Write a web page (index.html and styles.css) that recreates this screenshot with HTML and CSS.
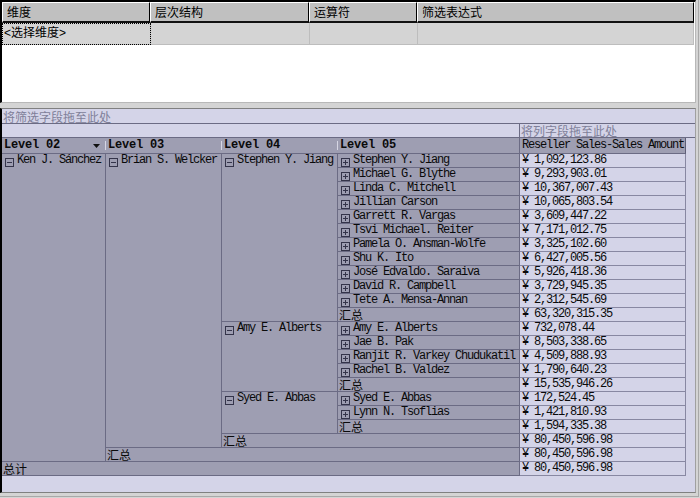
FILE: index.html
```html
<!DOCTYPE html>
<html>
<head>
<meta charset="utf-8">
<link rel="stylesheet" href="styles.css">
</head>
<body>
<div class="frame">
  <div class="top">
    <div class="ghead">
      <div class="gh w1">维度</div>
      <div class="gh w2">层次结构</div>
      <div class="gh w3">运算符</div>
      <div class="gh w4">筛选表达式</div>
    </div>
    <div class="grow">
      <div class="gd d1 focus">&lt;选择维度&gt;</div>
      <div class="gd d2"></div>
      <div class="gd d3"></div>
      <div class="gd d4"></div>
    </div>
  </div>
  <div class="pivot">
    <div class="filter-row">将筛选字段拖至此处</div>
    <div class="col-row"><div class="col-drop">将列字段拖至此处</div></div>
    <div class="pv">
      <div class="h hfirst"><span>Level 02</span><svg class="arrow" width="7" height="4" viewBox="0 0 7 4"><path d="M0 0h7L3.5 4z" fill="#111"/></svg></div>
      <div class="h">Level 03</div>
      <div class="h">Level 04</div>
      <div class="h hlast">Level 05</div>
      <div class="hv">Reseller Sales-Sales Amount</div>

      <div class="r c1 s22"><svg class="ic" viewBox="0 0 9 9"><rect x="0.5" y="0.5" width="8" height="8" fill="none" stroke="#34344a"/><path d="M2 4.5h5" stroke="#34344a"/></svg><span>Ken J. Sánchez</span></div>
      <div class="r c2 s21"><svg class="ic" viewBox="0 0 9 9"><rect x="0.5" y="0.5" width="8" height="8" fill="none" stroke="#34344a"/><path d="M2 4.5h5" stroke="#34344a"/></svg><span>Brian S. Welcker</span></div>
      <div class="r c3 s12"><svg class="ic" viewBox="0 0 9 9"><rect x="0.5" y="0.5" width="8" height="8" fill="none" stroke="#34344a"/><path d="M2 4.5h5" stroke="#34344a"/></svg><span>Stephen Y. Jiang</span></div>
      <div class="r c4"><svg class="ic" viewBox="0 0 9 9"><rect x="0.5" y="0.5" width="8" height="8" fill="none" stroke="#34344a"/><path d="M2 4.5h5M4.5 2v5" stroke="#34344a"/></svg><span>Stephen Y. Jiang</span></div>
      <div class="v"><span class="y">¥</span>1,092,123.86</div>

      <div class="r c4"><svg class="ic" viewBox="0 0 9 9"><rect x="0.5" y="0.5" width="8" height="8" fill="none" stroke="#34344a"/><path d="M2 4.5h5M4.5 2v5" stroke="#34344a"/></svg><span>Michael G. Blythe</span></div>
      <div class="v"><span class="y">¥</span>9,293,903.01</div>
      <div class="r c4"><svg class="ic" viewBox="0 0 9 9"><rect x="0.5" y="0.5" width="8" height="8" fill="none" stroke="#34344a"/><path d="M2 4.5h5M4.5 2v5" stroke="#34344a"/></svg><span>Linda C. Mitchell</span></div>
      <div class="v"><span class="y">¥</span>10,367,007.43</div>
      <div class="r c4"><svg class="ic" viewBox="0 0 9 9"><rect x="0.5" y="0.5" width="8" height="8" fill="none" stroke="#34344a"/><path d="M2 4.5h5M4.5 2v5" stroke="#34344a"/></svg><span>Jillian Carson</span></div>
      <div class="v"><span class="y">¥</span>10,065,803.54</div>
      <div class="r c4"><svg class="ic" viewBox="0 0 9 9"><rect x="0.5" y="0.5" width="8" height="8" fill="none" stroke="#34344a"/><path d="M2 4.5h5M4.5 2v5" stroke="#34344a"/></svg><span>Garrett R. Vargas</span></div>
      <div class="v"><span class="y">¥</span>3,609,447.22</div>
      <div class="r c4"><svg class="ic" viewBox="0 0 9 9"><rect x="0.5" y="0.5" width="8" height="8" fill="none" stroke="#34344a"/><path d="M2 4.5h5M4.5 2v5" stroke="#34344a"/></svg><span>Tsvi Michael. Reiter</span></div>
      <div class="v"><span class="y">¥</span>7,171,012.75</div>
      <div class="r c4"><svg class="ic" viewBox="0 0 9 9"><rect x="0.5" y="0.5" width="8" height="8" fill="none" stroke="#34344a"/><path d="M2 4.5h5M4.5 2v5" stroke="#34344a"/></svg><span>Pamela O. Ansman-Wolfe</span></div>
      <div class="v"><span class="y">¥</span>3,325,102.60</div>
      <div class="r c4"><svg class="ic" viewBox="0 0 9 9"><rect x="0.5" y="0.5" width="8" height="8" fill="none" stroke="#34344a"/><path d="M2 4.5h5M4.5 2v5" stroke="#34344a"/></svg><span>Shu K. Ito</span></div>
      <div class="v"><span class="y">¥</span>6,427,005.56</div>
      <div class="r c4"><svg class="ic" viewBox="0 0 9 9"><rect x="0.5" y="0.5" width="8" height="8" fill="none" stroke="#34344a"/><path d="M2 4.5h5M4.5 2v5" stroke="#34344a"/></svg><span>José Edvaldo. Saraiva</span></div>
      <div class="v"><span class="y">¥</span>5,926,418.36</div>
      <div class="r c4"><svg class="ic" viewBox="0 0 9 9"><rect x="0.5" y="0.5" width="8" height="8" fill="none" stroke="#34344a"/><path d="M2 4.5h5M4.5 2v5" stroke="#34344a"/></svg><span>David R. Campbell</span></div>
      <div class="v"><span class="y">¥</span>3,729,945.35</div>
      <div class="r c4"><svg class="ic" viewBox="0 0 9 9"><rect x="0.5" y="0.5" width="8" height="8" fill="none" stroke="#34344a"/><path d="M2 4.5h5M4.5 2v5" stroke="#34344a"/></svg><span>Tete A. Mensa-Annan</span></div>
      <div class="v"><span class="y">¥</span>2,312,545.69</div>
      <div class="r c4 sum">汇总</div>
      <div class="v"><span class="y">¥</span>63,320,315.35</div>

      <div class="r c3 s5"><svg class="ic" viewBox="0 0 9 9"><rect x="0.5" y="0.5" width="8" height="8" fill="none" stroke="#34344a"/><path d="M2 4.5h5" stroke="#34344a"/></svg><span>Amy E. Alberts</span></div>
      <div class="r c4"><svg class="ic" viewBox="0 0 9 9"><rect x="0.5" y="0.5" width="8" height="8" fill="none" stroke="#34344a"/><path d="M2 4.5h5M4.5 2v5" stroke="#34344a"/></svg><span>Amy E. Alberts</span></div>
      <div class="v"><span class="y">¥</span>732,078.44</div>
      <div class="r c4"><svg class="ic" viewBox="0 0 9 9"><rect x="0.5" y="0.5" width="8" height="8" fill="none" stroke="#34344a"/><path d="M2 4.5h5M4.5 2v5" stroke="#34344a"/></svg><span>Jae B. Pak</span></div>
      <div class="v"><span class="y">¥</span>8,503,338.65</div>
      <div class="r c4"><svg class="ic" viewBox="0 0 9 9"><rect x="0.5" y="0.5" width="8" height="8" fill="none" stroke="#34344a"/><path d="M2 4.5h5M4.5 2v5" stroke="#34344a"/></svg><span>Ranjit R. Varkey Chudukatil</span></div>
      <div class="v"><span class="y">¥</span>4,509,888.93</div>
      <div class="r c4"><svg class="ic" viewBox="0 0 9 9"><rect x="0.5" y="0.5" width="8" height="8" fill="none" stroke="#34344a"/><path d="M2 4.5h5M4.5 2v5" stroke="#34344a"/></svg><span>Rachel B. Valdez</span></div>
      <div class="v"><span class="y">¥</span>1,790,640.23</div>
      <div class="r c4 sum">汇总</div>
      <div class="v"><span class="y">¥</span>15,535,946.26</div>

      <div class="r c3 s3"><svg class="ic" viewBox="0 0 9 9"><rect x="0.5" y="0.5" width="8" height="8" fill="none" stroke="#34344a"/><path d="M2 4.5h5" stroke="#34344a"/></svg><span>Syed E. Abbas</span></div>
      <div class="r c4"><svg class="ic" viewBox="0 0 9 9"><rect x="0.5" y="0.5" width="8" height="8" fill="none" stroke="#34344a"/><path d="M2 4.5h5M4.5 2v5" stroke="#34344a"/></svg><span>Syed E. Abbas</span></div>
      <div class="v"><span class="y">¥</span>172,524.45</div>
      <div class="r c4"><svg class="ic" viewBox="0 0 9 9"><rect x="0.5" y="0.5" width="8" height="8" fill="none" stroke="#34344a"/><path d="M2 4.5h5M4.5 2v5" stroke="#34344a"/></svg><span>Lynn N. Tsoflias</span></div>
      <div class="v"><span class="y">¥</span>1,421,810.93</div>
      <div class="r c4 sum">汇总</div>
      <div class="v"><span class="y">¥</span>1,594,335.38</div>

      <div class="r c3 sp2 sum">汇总</div>
      <div class="v"><span class="y">¥</span>80,450,596.98</div>
      <div class="r c2 sp3 sum">汇总</div>
      <div class="v"><span class="y">¥</span>80,450,596.98</div>
      <div class="r c1 sp4 sum total">总计</div>
      <div class="v"><span class="y">¥</span>80,450,596.98</div>
    </div>
  </div>
</div>
</body>
</html>
```

FILE: styles.css
```css
* { box-sizing: border-box; }
html, body { margin: 0; padding: 0; }
body {
  width: 700px;
  height: 498px;
  overflow: hidden;
  background: #d4d4d4;
  font-family: "Liberation Sans", "Noto Sans CJK SC", sans-serif;
  font-size: 12px;
  color: #000;
}
.frame {
  width: 699px;
  height: 497px;
  border-right: 1px solid #a8a8a8;
  border-bottom: 1px solid #a8a8a8;
  display: flex;
  flex-direction: column;
}

/* ---------- top filter grid ---------- */
.top {
  width: 696px;
  height: 103px;
  flex: none;
  background: #fff;
  border-top: 2px solid #000;
  border-left: 2px solid #000;
  border-right: 1px solid #b8b8b8;
  border-bottom: 1px solid #b8b8b8;
}
.ghead, .grow { display: flex; }
.gh {
  height: 21px;
  background: #c0c0c0;
  border-top: 1px solid #fff;
  border-left: 1px solid #fff;
  border-right: 1px solid #000;
  border-bottom: 2px solid #111;
  padding-left: 4px;
  line-height: 18px;
  font-family: "Noto Sans CJK SC", sans-serif;
  white-space: nowrap;
}
.w1 { width: 148px; }
.w2 { width: 159px; }
.w3 { width: 108px; }
.w4 { width: 277px; }
.gd {
  height: 22px;
  background: #d4d4d4;
  border-right: 1px solid #bdbdbd;
  border-bottom: 1px solid #bdbdbd;
  padding-left: 2px;
  line-height: 21px;
  white-space: nowrap;
}
.d1 { width: 149px; }
.d2 { width: 159px; }
.d3 { width: 108px; }
.d4 { width: 276px; }
.focus { outline: 1px dotted #000; outline-offset: -1px; }

/* ---------- pivot ---------- */
.pivot {
  margin-top: 5px;
  width: 696px;
  height: 385px;
  flex: none;
  background: #d4d4e8;
  border-top: 1px solid #808080;
  border-left: 2px solid #000;
  border-right: 1px solid #a0a0a0;
  border-bottom: 1px solid #808080;
  font-family: "Noto Sans CJK SC", sans-serif;
}
.filter-row {
  height: 15px;
  border-bottom: 1px solid #6b6b84;
  padding-left: 1px;
  color: #7f7f99;
  line-height: 15px;
  white-space: nowrap;
}
.col-row {
  height: 14px;
  border-bottom: 1px solid #6b6b84;
  display: flex;
}
.col-drop {
  margin-left: 517px;
  flex: 1;
  border-left: 1px solid #6b6b84;
  padding-left: 1px;
  color: #7f7f99;
  line-height: 13px;
  white-space: nowrap;
}
.pv {
  display: grid;
  grid-template-columns: 104px 116px 116px 182px 166px;
  grid-template-rows: 16px repeat(23, 14px);
  font-family: "Liberation Mono", "Noto Sans CJK SC", monospace;
  font-size: 12px;
}
.h {
  background-color: #9e9eb2;
  background-image: linear-gradient(#d6d6e4, #d6d6e4);
  background-repeat: no-repeat;
  background-size: 1px 9px;
  background-position: right center;
  border-bottom: 1px solid #6b6b84;
  padding-left: 2px;
  font-weight: bold;
  letter-spacing: -0.2px;
  line-height: 15px;
  color: #0a0a0a;
  white-space: nowrap;
}
.hfirst {
  display: flex;
  justify-content: space-between;
  align-items: center;
  padding-right: 6px;
}
.arrow { display: block; }
.hlast {
  background-image: none;
  border-right: 1px solid #6b6b84;
}
.hv {
  background: #9e9eb2;
  border-right: 1px solid #5e5e76;
  border-bottom: 1px solid #6b6b84;
  padding-left: 2px;
  letter-spacing: -1.2px;
  line-height: 15px;
  color: #0a0a0a;
  white-space: nowrap;
  overflow: hidden;
}
.r {
  background: #9e9eb2;
  border-right: 1px solid #6b6b84;
  border-bottom: 1px solid #6b6b84;
  display: flex;
  align-items: flex-start;
  padding-left: 3px;
  letter-spacing: -1.2px;
  line-height: 13px;
  color: #0a0a0a;
  white-space: nowrap;
  overflow: hidden;
}
.ic {
  width: 9px;
  height: 9px;
  flex: none;
  margin-top: 4px;
  margin-right: 3px;
}
.sum {
  font-family: "Noto Sans CJK SC", sans-serif;
  letter-spacing: 0;
  padding-left: 1px;
  line-height: 13px;
  overflow: visible;
}
.total { padding-left: 1px; }
.c1 { grid-column: 1; }
.c2 { grid-column: 2; }
.c3 { grid-column: 3; }
.c4 { grid-column: 4; }
.sp2 { grid-column-end: span 2; }
.sp3 { grid-column-end: span 3; }
.sp4 { grid-column-end: span 4; }
.s22 { grid-row-end: span 22; }
.s21 { grid-row-end: span 21; }
.s12 { grid-row-end: span 12; }
.s5 { grid-row-end: span 5; }
.s3 { grid-row-end: span 3; }
.v {
  grid-column: 5;
  background: #d4d4e8;
  border-right: 1px solid #8888a2;
  border-bottom: 1px solid #8888a2;
  padding-left: 2px;
  letter-spacing: -1.2px;
  line-height: 13px;
  color: #0a0a0a;
  white-space: nowrap;
  overflow: hidden;
}
.y {
  display: inline-block;
  width: 12px;
  letter-spacing: 0;
}
```
